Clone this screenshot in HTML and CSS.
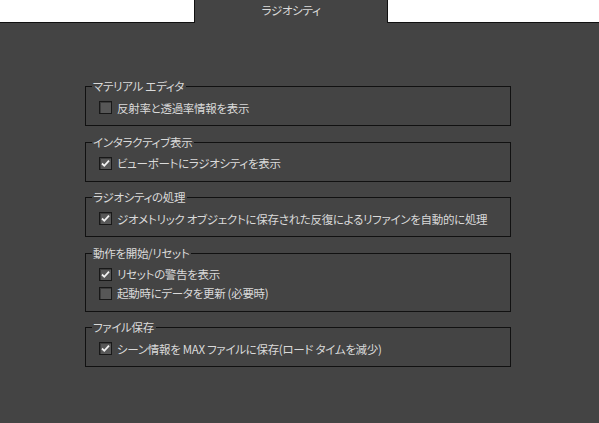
FILE: index.html
```html
<!DOCTYPE html>
<html lang="ja">
<head>
<meta charset="utf-8">
<title>ラジオシティ</title>
<link rel="stylesheet" href="styles.css">
</head>
<body>
<div class="tabbar">
  <div class="tab-fill tab-fill-left"></div>
  <div class="tab">ラジオシティ</div>
  <div class="tab-fill tab-fill-right"></div>
</div>
<div class="panel">
  <fieldset class="group">
    <legend>マテリアル エディタ</legend>
    <label class="row"><span class="cb"></span>反射率と透過率情報を表示</label>
  </fieldset>
  <fieldset class="group">
    <legend>インタラクティブ表示</legend>
    <label class="row"><span class="cb checked"></span>ビューポートにラジオシティを表示</label>
  </fieldset>
  <fieldset class="group">
    <legend>ラジオシティの処理</legend>
    <label class="row"><span class="cb checked"></span>ジオメトリック オブジェクトに保存された反復によるリファインを自動的に処理</label>
  </fieldset>
  <fieldset class="group">
    <legend>動作を開始/リセット</legend>
    <label class="row"><span class="cb checked"></span>リセットの警告を表示</label>
    <label class="row"><span class="cb"></span>起動時にデータを更新 (必要時)</label>
  </fieldset>
  <fieldset class="group">
    <legend>ファイル保存</legend>
    <label class="row"><span class="cb checked"></span>シーン情報を MAX ファイルに保存(ロード タイムを減少)</label>
  </fieldset>
</div>
</body>
</html>
```

FILE: styles.css
```css
html, body {
  margin: 0;
  padding: 0;
  height: 100%;
}
body {
  background: #444444;
  font-family: "Noto Sans CJK JP", "Liberation Sans", sans-serif;
  font-size: 11.5px;
  letter-spacing: -0.3px;
  font-feature-settings: "palt";
  color: #dadada;
  display: flex;
  flex-direction: column;
}
.tabbar {
  display: flex;
  height: 23px;
  flex: none;
}
.tab-fill {
  box-sizing: border-box;
  height: 23px;
  background: #ffffff;
  border-bottom: 1px solid #111111;
}
.tab-fill-left {
  width: 194px;
}
.tab-fill-right {
  flex: 1;
}
.tab {
  box-sizing: border-box;
  width: 194px;
  height: 23px;
  background: #444444;
  border-left: 1px solid #111111;
  border-right: 1px solid #111111;
  text-align: center;
  line-height: 21px;
  color: #dadada;
}
.panel {
  flex: 1;
  padding: 57px 0 0 85px;
  display: flex;
  flex-direction: column;
  gap: 9.5px;
}
.group {
  box-sizing: border-box;
  width: 426px;
  margin: 0;
  padding: 5px 8px 8px 6px;
  border: 1px solid #111111;
  min-inline-size: 0;
}
.group legend {
  padding: 0 2px 0 1px;
  line-height: 13px;
  height: 13px;
  color: #dadada;
}
.row {
  display: flex;
  align-items: center;
  height: 19px;
  padding-left: 7px;
  white-space: nowrap;
}
.cb {
  box-sizing: border-box;
  width: 13px;
  height: 13px;
  flex: none;
  margin-right: 5px;
  border: 1px solid #181818;
  background: #575757;
  box-shadow: inset 1px 1px 0 #3c3c3c;
}
.cb.checked {
  background: #575757 url("data:image/svg+xml;utf8,<svg xmlns='http://www.w3.org/2000/svg' width='11' height='11' viewBox='0 0 11 11'><path d='M2 5.5 L4.3 7.8 L9 2.6' fill='none' stroke='%23f2f2f2' stroke-width='1.8'/></svg>") no-repeat center;
}
```
